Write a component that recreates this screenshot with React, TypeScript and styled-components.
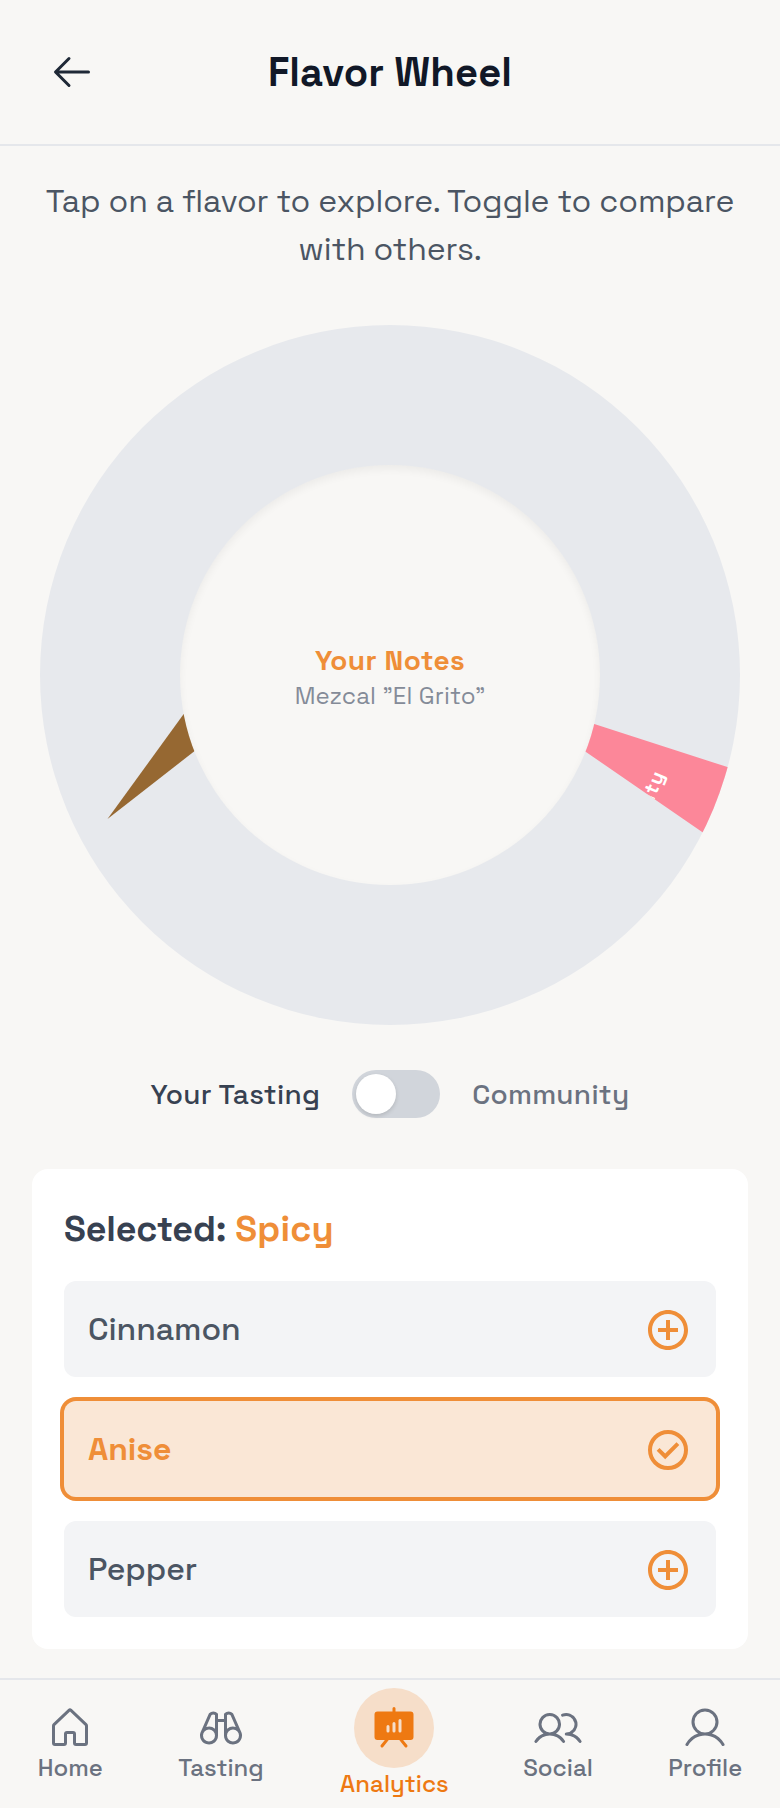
import React from "react";
import styled, { createGlobalStyle } from "styled-components";
import { PiArrowLeft, PiBinoculars, PiPresentationChartFill, PiUsers, PiUser } from "react-icons/pi";
import { MdAddCircleOutline } from "react-icons/md";

const Global = createGlobalStyle`
  * { box-sizing: border-box; }
  body { margin: 0; background: #f8f7f5; font-family: "Space Grotesk", Inter, "Liberation Sans", sans-serif; }
`;

const Page = styled.div`
  width: 780px;
  height: 1808px;
  display: flex;
  flex-direction: column;
  background: #f8f7f5;
  overflow: hidden;
`;

const Header = styled.header`
  height: 146px;
  flex: none;
  display: grid;
  grid-template-columns: 80px 1fr 80px;
  align-items: center;
  padding: 0 32px;
  border-bottom: 2px solid #e5e7eb;
`;

const BackButton = styled.button`
  display: grid;
  place-items: center;
  height: 80px;
  padding: 0;
  border: 0;
  background: none;
  color: #1f2937;
`;

const Title = styled.h1`
  margin: 0;
  padding-top: 2px;
  text-align: center;
  font-size: 40px;
  line-height: 50px;
  font-weight: 700;
  letter-spacing: 0.1px;
  color: #111827;
`;

const Intro = styled.p`
  margin: 31px 32px 0;
  text-align: center;
  font-size: 32px;
  line-height: 48px;
  letter-spacing: -0.13px;
  color: #4b5563;
`;

const WheelArea = styled.div`
  display: grid;
  width: 700px;
  height: 700px;
  margin: 52px auto 0;
  flex: none;
  > * { grid-area: 1 / 1; place-self: center; }
`;

const Hub = styled.div`
  width: 420px;
  height: 420px;
  padding-top: 1px;
  border-radius: 50%;
  background: #f8f7f5;
  box-shadow: inset 0 4px 8px rgba(0, 0, 0, 0.05);
  display: flex;
  flex-direction: column;
  align-items: center;
  justify-content: center;
`;

const HubTitle = styled.strong`
  font-size: 28px;
  line-height: 40px;
  letter-spacing: 0.4px;
  color: #ef8e38;
`;

const HubText = styled.span`
  font-size: 24px;
  line-height: 32px;
  letter-spacing: 0.15px;
  color: #848b98;
`;

const Compare = styled.div`
  display: flex;
  align-items: center;
  justify-content: center;
  gap: 32px;
  height: 48px;
  margin-top: 45px;
  flex: none;
`;

const CompareLabel = styled.span<{ $on?: boolean }>`
  font-size: 28px;
  font-weight: 500;
  white-space: nowrap;
  letter-spacing: 0.3px;
  color: ${(p) => (p.$on ? "#374151" : "#6b7280")};
`;

const Switch = styled.div`
  width: 88px;
  height: 48px;
  padding: 4px;
  border-radius: 24px;
  background: #d1d5db;
`;

const Knob = styled.div`
  width: 40px;
  height: 40px;
  border-radius: 50%;
  background: #fff;
  box-shadow: 0 2px 4px rgba(0, 0, 0, 0.14);
`;

const Card = styled.section`
  height: 480px;
  flex: none;
  margin: 51px 32px 0;
  padding: 32px;
  border-radius: 16px;
  background: #fff;
`;

const CardTitle = styled.h2`
  margin: 0 0 24.4px;
  font-size: 36px;
  line-height: 56px;
  font-weight: 700;
  letter-spacing: -0.15px;
  color: #374151;
  em { font-style: normal; letter-spacing: 0.2px; color: #ef8e38; }
`;

const NoteList = styled.div`
  display: grid;
  gap: 24px;
`;

const Note = styled.div<{ $on?: boolean }>`
  display: flex;
  align-items: center;
  justify-content: space-between;
  height: 96px;
  padding: 0 24px;
  border-radius: 12px;
  font-size: 32px;
  letter-spacing: -0.1px;
  font-weight: ${(p) => (p.$on ? 700 : 500)};
  color: ${(p) => (p.$on ? "#ef8e38" : "#4b5563")};
  background: ${(p) => (p.$on ? "#fae7d6" : "#f3f4f6")};
  box-shadow: ${(p) => (p.$on ? "0 0 0 4px #ef8e38" : "none")};
  svg { margin-top: 1px; color: #ef8e38; }
`;

const NavBar = styled.nav`
  display: flex;
  height: 130px;
  margin-top: auto;
  flex: none;
  justify-content: space-around;
  padding-top: 8px;
  border-top: 2px solid #e5e7eb;
`;

const NavItem = styled.a<{ $active?: boolean }>`
  display: flex;
  flex-direction: column;
  align-items: center;
  margin: ${(p) => (p.$active ? "0 -1px 0 1px" : 0)};
  padding-top: ${(p) => (p.$active ? 0 : 16)}px;
  font-size: 24px;
  line-height: 32px;
  font-weight: 500;
  color: ${(p) => (p.$active ? "#ee7912" : "#6b7280")};
`;

const Bubble = styled.span`
  display: grid;
  place-items: center;
  width: 80px;
  height: 80px;
  border-radius: 50%;
  background: #f6dec9;
`;

const HouseIcon = () => (
  <svg width="48" height="48" viewBox="0 0 256 256" fill="currentColor">
    <path d="M218.83,103.77l-80-75.48a1.14,1.14,0,0,1-.11-.11,16,16,0,0,0-21.53,0l-.11.11L37.17,103.77A16,16,0,0,0,32,115.55V208a16,16,0,0,0,16,16H96a16,16,0,0,0,16-16V160h32v48a16,16,0,0,0,16,16h48a16,16,0,0,0,16-16V115.55A16,16,0,0,0,218.83,103.77ZM208,208H160V160a16,16,0,0,0-16-16H112a16,16,0,0,0-16,16v48H48V115.55l.11-.1L128,40l79.9,75.43.11.1Z" />
  </svg>
);

const CheckCircleIcon = () => (
  <svg width="48" height="48" viewBox="0 -960 960 960" fill="none" stroke="currentColor" strokeWidth="80">
    <circle cx="480" cy="-480" r="360" />
    <path d="m424-296 282-282-56-56-226 226-114-114-56 56 170 170Z" fill="currentColor" stroke="none" />
  </svg>
);

const Wheel = () => (
  <svg width="700" height="700" viewBox="0 0 700 700">
    <defs>
      <clipPath id="rim"><circle cx="350" cy="350" r="350" /></clipPath>
      <clipPath id="slice"><path d="M500 382 L554.3 399 L720 452.6 L700 533 L546 427 L500 396Z" /></clipPath>
    </defs>
    <circle cx="350" cy="350" r="350" fill="#e7e9ed" />
    <path d="M143.7 389 L67.5 494 L154 426.5 L190 390Z" fill="#966832" />
    <g clipPath="url(#rim)">
      <g clipPath="url(#slice)">
        <rect x="480" y="360" width="240" height="180" fill="#fc8799" />
        <text transform="translate(625 449) rotate(-67.5)" textAnchor="end" fontSize="20" fontWeight="700" letterSpacing="1" fill="#fff">Fruity</text>
      </g>
    </g>
  </svg>
);

export default function App() {
  return (
    <Page>
      <Global />
      <Header>
        <BackButton aria-label="Back"><PiArrowLeft size={48} /></BackButton>
        <Title>Flavor Wheel</Title>
      </Header>
      <Intro>Tap on a flavor to explore. Toggle to compare with others.</Intro>
      <WheelArea>
        <Wheel />
        <Hub>
          <HubTitle>Your Notes</HubTitle>
          <HubText>Mezcal ”El Grito”</HubText>
        </Hub>
      </WheelArea>
      <Compare>
        <CompareLabel $on>Your Tasting</CompareLabel>
        <Switch><Knob /></Switch>
        <CompareLabel>Community</CompareLabel>
      </Compare>
      <Card>
        <CardTitle>Selected: <em>Spicy</em></CardTitle>
        <NoteList>
          <Note>Cinnamon<MdAddCircleOutline size={48} /></Note>
          <Note $on>Anise<CheckCircleIcon /></Note>
          <Note>Pepper<MdAddCircleOutline size={48} /></Note>
        </NoteList>
      </Card>
      <NavBar>
        <NavItem><HouseIcon />Home</NavItem>
        <NavItem><PiBinoculars size={48} />Tasting</NavItem>
        <NavItem $active><Bubble><PiPresentationChartFill size={48} /></Bubble>Analytics</NavItem>
        <NavItem><PiUsers size={48} />Social</NavItem>
        <NavItem><PiUser size={48} />Profile</NavItem>
      </NavBar>
    </Page>
  );
}
